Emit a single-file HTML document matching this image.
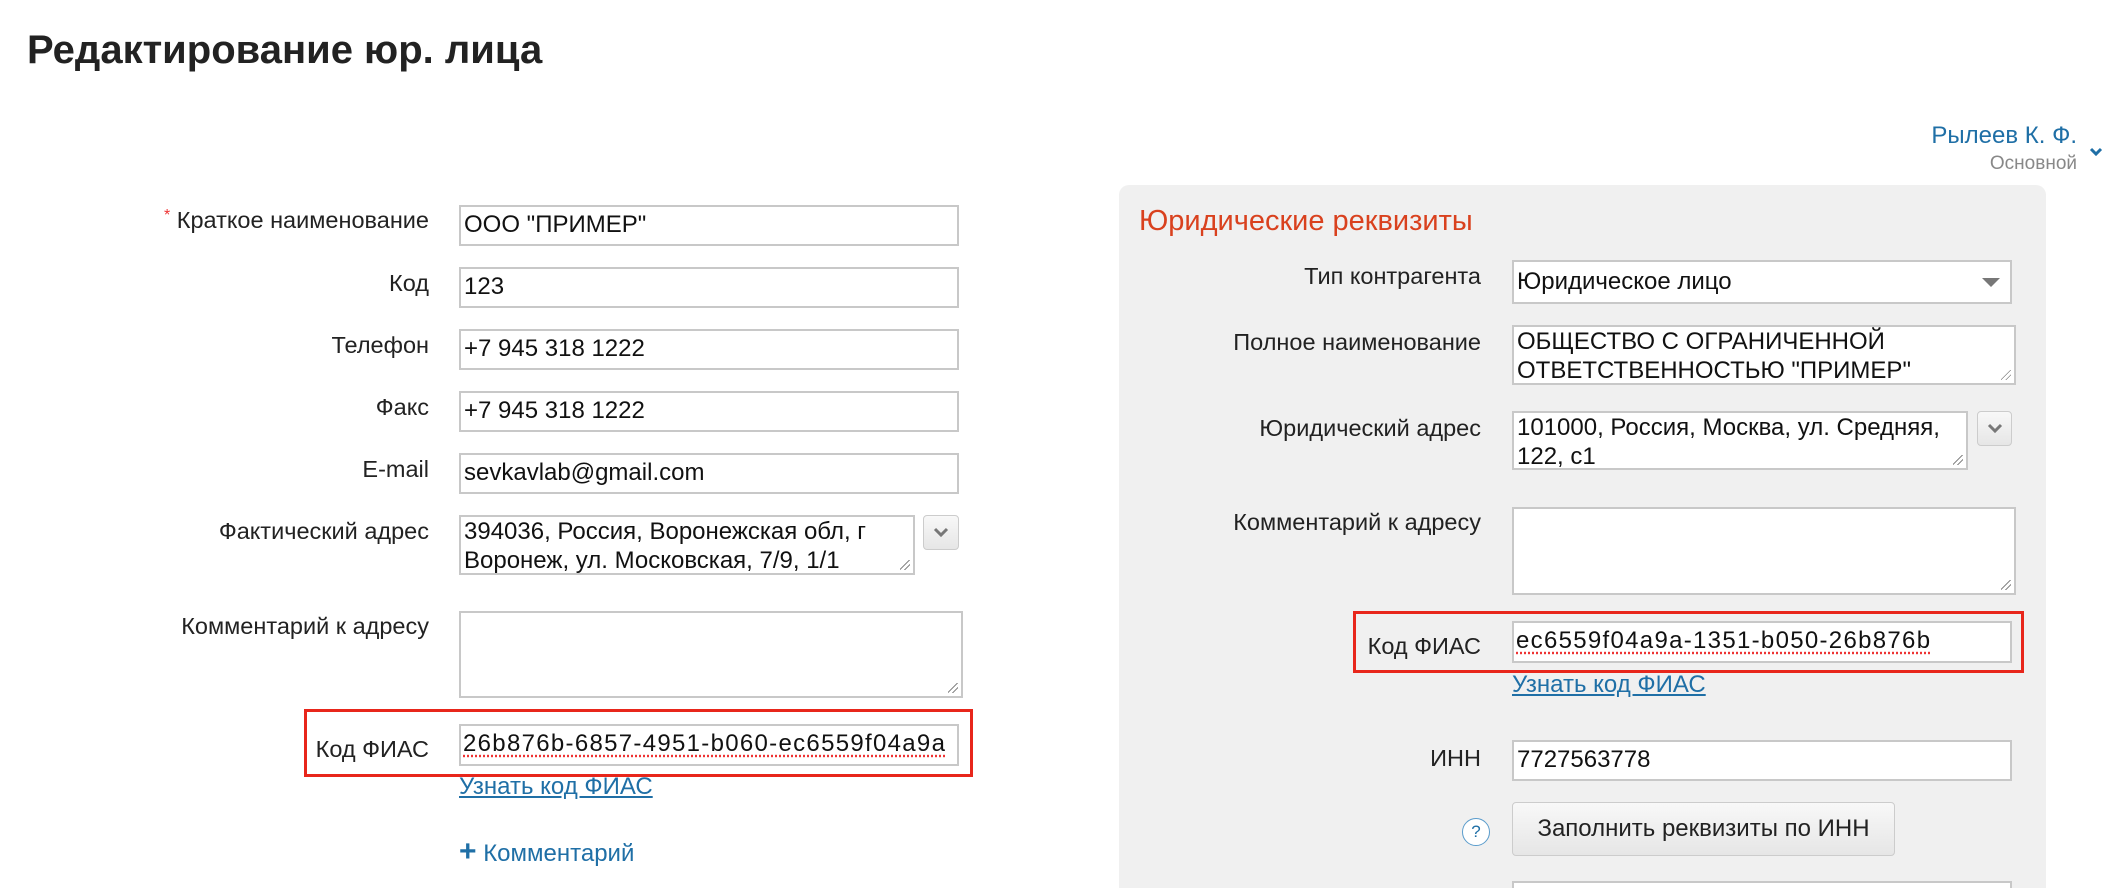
<!DOCTYPE html>
<html style="overflow:hidden;height:888px"><head><meta charset="utf-8"><style>
body{margin:0;width:2116px;height:888px;overflow:hidden;background:#fff;font-family:"Liberation Sans",sans-serif;color:#222;position:relative}
.a{position:absolute}
.lbl{position:absolute;font-size:23.5px;text-align:right;color:#222;white-space:nowrap}
.in{position:absolute;box-sizing:border-box;border:2px solid #c8c8c8;background:#fff;font-size:24px;padding:0 3px;line-height:36px;white-space:nowrap;overflow:hidden;color:#111}
.ta{line-height:29px;white-space:normal;padding:0 3px}
.grip{position:absolute;right:3px;bottom:3px;width:10px;height:10px;background:linear-gradient(135deg,transparent 45%,#888 45%,#888 52%,transparent 52%,transparent 70%,#888 70%,#888 77%,transparent 77%)}
.btn{position:absolute;box-sizing:border-box;border:1px solid #ccc;border-radius:4px;background:linear-gradient(#f8f8f8,#e6e6e6)}
.red{position:absolute;box-sizing:border-box;border:3px solid #e8261b}
.link{position:absolute;font-size:24px;color:#1f6fa6;text-decoration:underline}
.dots{text-decoration:underline dotted #e33;text-underline-offset:4px;letter-spacing:1.3px}
</style></head><body>
<div class="a" style="left:27px;top:28px;font-size:40px;font-weight:bold;color:#222">Редактирование юр. лица</div>

<div class="a" style="right:39px;top:122px;font-size:24px;color:#1f6fa6">Рылеев К. Ф.</div>
<div class="a" style="right:39px;top:153px;font-size:19px;color:#888">Основной</div>
<svg class="a" style="left:2089px;top:147px" width="14" height="9"><path d="M2 2 L7 7 L12 2" stroke="#1f6fa6" stroke-width="3" fill="none"/></svg>

<!-- left -->
<div class="lbl" style="right:1687px;top:207px"><span style="color:#e33;font-size:16px;vertical-align:top">*</span> Краткое наименование</div>
<div class="in" style="left:459px;top:205px;width:500px;height:41px">ООО "ПРИМЕР"</div>
<div class="lbl" style="right:1687px;top:270px">Код</div>
<div class="in" style="left:459px;top:267px;width:500px;height:41px">123</div>
<div class="lbl" style="right:1687px;top:332px">Телефон</div>
<div class="in" style="left:459px;top:329px;width:500px;height:41px">+7 945 318 1222</div>
<div class="lbl" style="right:1687px;top:394px">Факс</div>
<div class="in" style="left:459px;top:391px;width:500px;height:41px">+7 945 318 1222</div>
<div class="lbl" style="right:1687px;top:456px">E-mail</div>
<div class="in" style="left:459px;top:453px;width:500px;height:41px">sevkavlab@gmail.com</div>
<div class="lbl" style="right:1687px;top:518px">Фактический адрес</div>
<div class="in ta" style="left:459px;top:515px;width:456px;height:60px">394036, Россия, Воронежская обл, г Воронеж, ул. Московская, 7/9, 1/1<div class="grip"></div></div>
<div class="btn" style="left:923px;top:515px;width:36px;height:35px"><svg width="34" height="33"><path d="M11 13 L17 19 L23 13" stroke="#777" stroke-width="3" fill="none"/></svg></div>
<div class="lbl" style="right:1687px;top:613px">Комментарий к адресу</div>
<div class="in ta" style="left:459px;top:611px;width:504px;height:87px"><div class="grip"></div></div>
<div class="red" style="left:304px;top:709px;width:669px;height:68px"></div>
<div class="lbl" style="right:1687px;top:736px">Код ФИАС</div>
<div class="in" style="left:459px;top:724px;width:500px;height:42px;padding:0 2px"><span class="dots">26b876b-6857-4951-b060-ec6559f04a9a</span></div>
<div class="link" style="left:459px;top:773px">Узнать код ФИАС</div>
<div class="a" style="left:459px;top:840px;font-size:24px;color:#1f6fa6"><b style="font-size:30px;line-height:22px">+</b> Комментарий</div>

<!-- right panel -->
<div class="a" style="left:1119px;top:185px;width:927px;height:720px;background:#f0f0f0;border-radius:10px"></div>
<div class="a" style="left:1139px;top:205px;font-size:29px;color:#d9411e">Юридические реквизиты</div>
<div class="lbl" style="right:635px;top:263px">Тип контрагента</div>
<div class="in" style="left:1512px;top:260px;width:500px;height:44px;line-height:40px">Юридическое лицо<svg style="position:absolute;right:10px;top:16px" width="18" height="10"><path d="M0 0 L18 0 L9 9Z" fill="#777"/></svg></div>
<div class="lbl" style="right:635px;top:329px">Полное наименование</div>
<div class="in ta" style="left:1512px;top:325px;width:504px;height:60px">ОБЩЕСТВО С ОГРАНИЧЕННОЙ ОТВЕТСТВЕННОСТЬЮ "ПРИМЕР"<div class="grip"></div></div>
<div class="lbl" style="right:635px;top:415px">Юридический адрес</div>
<div class="in ta" style="left:1512px;top:411px;width:456px;height:59px">101000, Россия, Москва, ул. Средняя, 122, с1<div class="grip"></div></div>
<div class="btn" style="left:1977px;top:411px;width:35px;height:35px"><svg width="33" height="33"><path d="M11 13 L17 19 L23 13" stroke="#777" stroke-width="3" fill="none"/></svg></div>
<div class="lbl" style="right:635px;top:509px">Комментарий к адресу</div>
<div class="in ta" style="left:1512px;top:507px;width:504px;height:88px"><div class="grip"></div></div>
<div class="red" style="left:1353px;top:611px;width:671px;height:62px"></div>
<div class="lbl" style="right:635px;top:633px">Код ФИАС</div>
<div class="in" style="left:1512px;top:621px;width:500px;height:42px;padding:0 2px;background:#fff"><span class="dots">ec6559f04a9a-1351-b050-26b876b</span></div>
<div class="link" style="left:1512px;top:671px">Узнать код ФИАС</div>
<div class="lbl" style="right:635px;top:745px">ИНН</div>
<div class="in" style="left:1512px;top:740px;width:500px;height:41px">7727563778</div>
<div class="a" style="left:1462px;top:818px;width:26px;height:26px;border:1.5px solid #5a9ccc;border-radius:50%;background:#fff;color:#1f6fa6;font-size:17px;text-align:center;line-height:26px">?</div>
<div class="btn" style="left:1512px;top:802px;width:383px;height:54px;font-size:24px;line-height:52px;text-align:center;color:#222">Заполнить реквизиты по ИНН</div>
<div class="in" style="left:1512px;top:881px;width:500px;height:30px"></div>
</body></html>
